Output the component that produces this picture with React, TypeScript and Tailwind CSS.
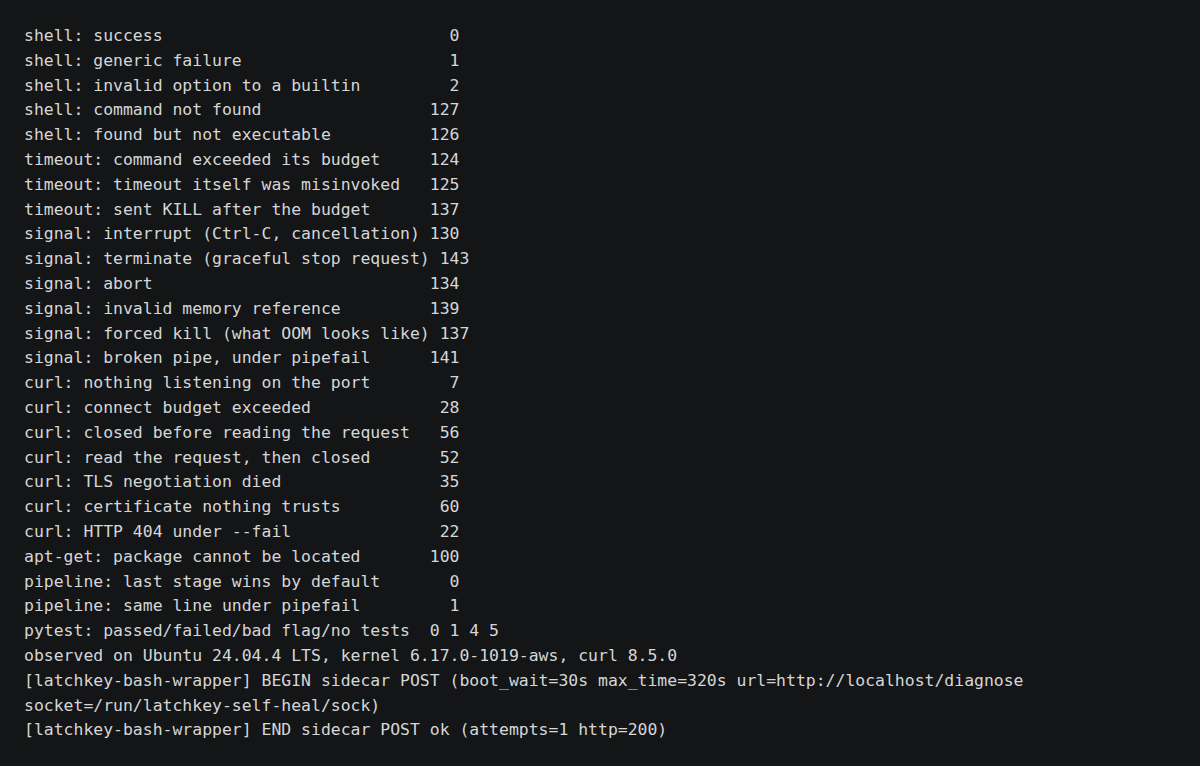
const rows: [string, string][] = [
  ["shell: success", "0"],
  ["shell: generic failure", "1"],
  ["shell: invalid option to a builtin", "2"],
  ["shell: command not found", "127"],
  ["shell: found but not executable", "126"],
  ["timeout: command exceeded its budget", "124"],
  ["timeout: timeout itself was misinvoked", "125"],
  ["timeout: sent KILL after the budget", "137"],
  ["signal: interrupt (Ctrl-C, cancellation)", "130"],
  ["signal: terminate (graceful stop request)", "143"],
  ["signal: abort", "134"],
  ["signal: invalid memory reference", "139"],
  ["signal: forced kill (what OOM looks like)", "137"],
  ["signal: broken pipe, under pipefail", "141"],
  ["curl: nothing listening on the port", "7"],
  ["curl: connect budget exceeded", "28"],
  ["curl: closed before reading the request", "56"],
  ["curl: read the request, then closed", "52"],
  ["curl: TLS negotiation died", "35"],
  ["curl: certificate nothing trusts", "60"],
  ["curl: HTTP 404 under --fail", "22"],
  ["apt-get: package cannot be located", "100"],
  ["pipeline: last stage wins by default", "0"],
  ["pipeline: same line under pipefail", "1"],
  ["pytest: passed/failed/bad flag/no tests", "0 1 4 5"],
];

const tail = [
  "observed on Ubuntu 24.04.4 LTS, kernel 6.17.0-1019-aws, curl 8.5.0",
  "[latchkey-bash-wrapper] BEGIN sidecar POST (boot_wait=30s max_time=320s url=http://localhost/diagnose",
  "socket=/run/latchkey-self-heal/sock)",
  "[latchkey-bash-wrapper] END sidecar POST ok (attempts=1 http=200)",
];

export default function App() {
  const lines = [
    ...rows.map(([label, code]) => label.padEnd(40) + " " + code.padStart(3)),
    ...tail,
  ];
  return (
    <div className="min-h-screen w-full bg-[#131517] px-6 pt-[24px] font-['DejaVu_Sans_Mono',monospace] text-[16.45px] leading-[24.8px] text-[#d6d6d6]">
      {lines.map((l, i) => (
        <div key={i} className="whitespace-pre">
          {l}
        </div>
      ))}
    </div>
  );
}
